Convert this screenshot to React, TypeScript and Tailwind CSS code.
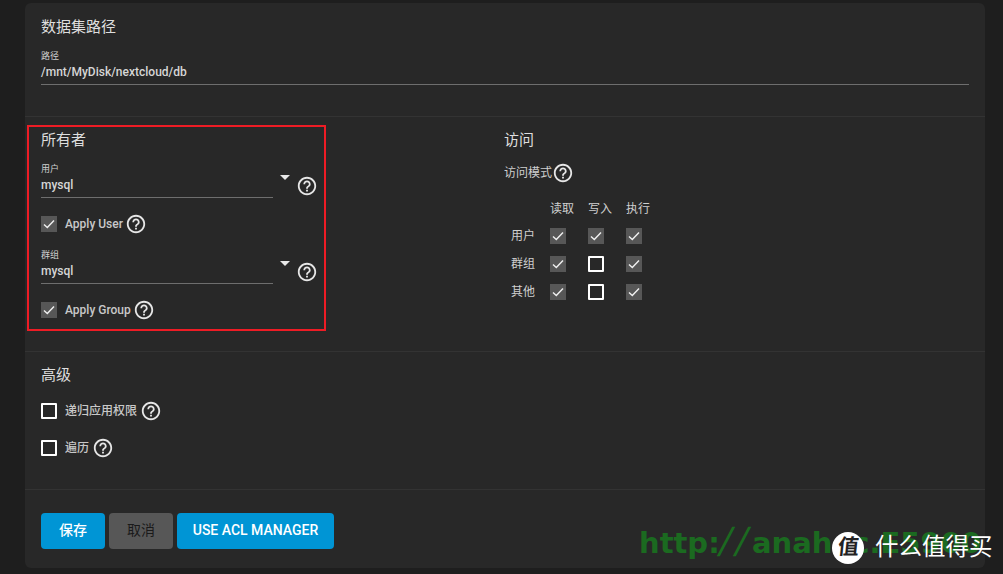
const FONT = "font-['Roboto','Noto_Sans_CJK_SC',sans-serif]";

function Help({ size = 22 }: { size?: number }) {
  return (
    <svg width={size} height={size} viewBox="0 0 24 24" fill="#e6e6e6" className="shrink-0">
      <path d="M11 18h2v-2h-2v2zm1-16C6.48 2 2 6.48 2 12s4.48 10 10 10 10-4.48 10-10S17.52 2 12 2zm0 18c-4.41 0-8-3.59-8-8s3.59-8 8-8 8 3.59 8 8-3.59 8-8 8zm0-14c-2.21 0-4 1.79-4 4h2c0-1.1.9-2 2-2s2 .9 2 2c0 2-3 1.75-3 5h2c0-2.25 3-2.5 3-5 0-2.21-1.79-4-4-4z" />
    </svg>
  );
}

function Box({ on }: { on: boolean }) {
  return on ? (
    <span className="w-4 h-4 bg-[#575757] flex items-center justify-center shrink-0">
      <svg width="14" height="14" viewBox="0 0 14 14" fill="none" stroke="#f0f0f0" strokeWidth="1.4">
        <path d="M2 7.5 L5.3 10.6 L12 3.4" />
      </svg>
    </span>
  ) : (
    <span className="w-4 h-4 border-2 border-white rounded-[1px] shrink-0" />
  );
}

function Heading({ children }: { children: React.ReactNode }) {
  return <h3 className="text-[15px] leading-[20px] text-[#dedede]">{children}</h3>;
}

function SelectField({ label, value }: { label: string; value: string }) {
  return (
    <div className="flex items-start">
      <div className="w-[232px]">
        <div className="text-[9px] leading-[12px] text-[#d0d0d0]">{label}</div>
        <div className="text-[12px] font-medium pt-[1px] leading-[18px] text-[#d6d6d6] h-[23px] border-b border-[#6e6e6e]">{value}</div>
      </div>
      <span className="ml-[7px] mt-[12px] w-0 h-0 border-x-[5.5px] border-x-transparent border-t-[5.5px] border-t-[#e8e8e8]" />
      <span className="ml-[6px] mt-[12px]"><Help /></span>
    </div>
  );
}

function Check({ on, label, gap = "ml-[2px]" }: { on: boolean; label: string; gap?: string }) {
  return (
    <div className="flex items-center h-[22px]">
      <Box on={on} />
      <span className="ml-2 text-[12px] font-medium text-[#c8c8c8]">{label}</span>
      <span className={gap + " flex"}><Help /></span>
    </div>
  );
}

const rows: [string, boolean, boolean, boolean][] = [
  ["用户", true, true, true],
  ["群组", true, false, true],
  ["其他", true, false, true],
];

export default function App() {
  return (
    <div className={FONT + " relative w-[1003px] h-[574px] overflow-hidden bg-[#1e1e1e] pt-[3px] pl-[25px]"}>
      <main className="w-[960px] h-[565px] bg-[#282828] rounded-[6px] flex flex-col">
        <section className="h-[114px] shrink-0 border-b border-[#333333] pl-4 pr-4 pt-[14px]">
          <Heading>数据集路径</Heading>
          <div className="mt-[13px] text-[9px] leading-[12px] text-[#d0d0d0]">路径</div>
          <div className="text-[12px] font-medium pt-[1px] leading-[18px] h-[23px] text-[#d6d6d6] border-b border-[#6e6e6e]">/mnt/MyDisk/nextcloud/db</div>
        </section>

        <section className="h-[235px] shrink-0 border-b border-[#333333] flex pt-2">
          <div className="ml-[2px] w-[299px] h-[206px] border-2 border-[#ee1c25] pl-3 pt-[3px]">
            <Heading>所有者</Heading>
            <div className="mt-[13px]"><SelectField label="用户" value="mysql" /></div>
            <div className="mt-[15px]"><Check on label="Apply User" /></div>
            <div className="mt-[14px]"><SelectField label="群组" value="mysql" /></div>
            <div className="mt-[15px]"><Check on label="Apply Group" /></div>
          </div>
          <div className="ml-[178px] pt-[5px]">
            <Heading>访问</Heading>
            <div className="mt-[12px] flex items-center h-[22px] text-[12px] text-[#cfcfcf]">
              访问模式<Help />
            </div>
            <div className="mt-[11px] grid grid-cols-[46px_38px_38px_38px] grid-rows-[27px_28px_28px_28px] text-[12px] text-[#cfcfcf] items-center">
              <span />
              <span>读取</span>
              <span>写入</span>
              <span>执行</span>
              {rows.map((r) => (
                <div key={r[0]} className="contents">
                  <span className="pl-[7px]">{r[0]}</span>
                  <Box on={r[1]} />
                  <Box on={r[2]} />
                  <Box on={r[3]} />
                </div>
              ))}
            </div>
          </div>
        </section>

        <section className="h-[138px] shrink-0 border-b border-[#333333] pl-4 pt-[13px]">
          <Heading>高级</Heading>
          <div className="mt-[15px]"><Check on={false} label="递归应用权限" gap="ml-[3px]" /></div>
          <div className="mt-[15px]"><Check on={false} label="遍历" gap="ml-[3px]" /></div>
        </section>

        <footer className="pl-4 pt-[23px] flex gap-1 font-medium text-[14px]">
          <button className="w-16 h-9 pb-[2px] rounded-[4px] bg-[#0095d5] text-white">保存</button>
          <button className="w-16 h-9 pb-[2px] rounded-[4px] bg-[#575757] text-[#1a1a1a] font-normal">取消</button>
          <button className="w-[157px] h-9 pb-[2px] rounded-[4px] bg-[#0095d5] text-white">USE ACL MANAGER</button>
        </footer>
      </main>

      <div className="absolute left-[639px] top-[521px] font-['DejaVu_Sans',sans-serif] font-bold text-[29px] leading-[40px] text-[#1b6a20] whitespace-nowrap">
        http:<span className="inline-block -skew-x-12 font-normal text-[36px] leading-[40px] tracking-[4px]">//</span>anahoc.E5900
      </div>
      <div className="absolute left-[832px] top-[532px] w-8 h-8 rounded-full bg-white flex items-center justify-center text-[21px] font-bold text-[#222222]">
        <span className="-skew-x-6">值</span>
      </div>
      <div className="absolute left-[875px] top-[532px] text-[23.5px] leading-[30px] text-white whitespace-nowrap">什么值得买</div>
    </div>
  );
}
